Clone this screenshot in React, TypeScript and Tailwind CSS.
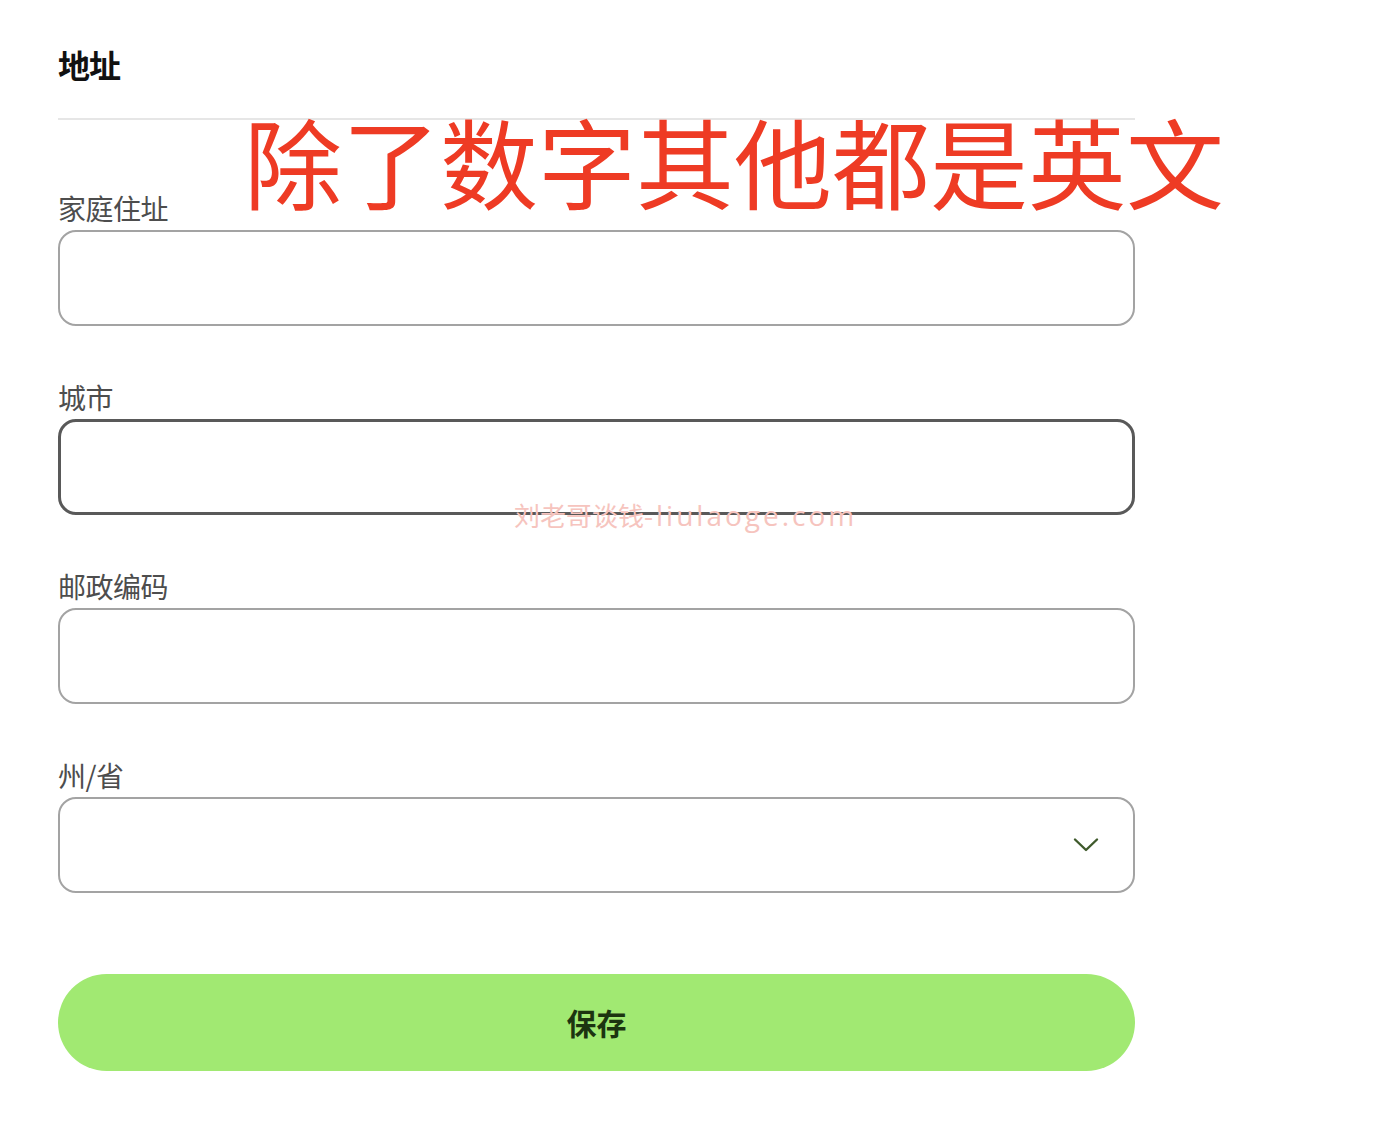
import React from "react";

const cjk = { fontFamily: '"Noto Sans CJK SC", "Noto Sans", sans-serif' };

function Field({ label, focused, select }: { label: string; focused?: boolean; select?: boolean }) {
  return (
    <div className="flex flex-col">
      <label className="text-[28px] leading-[36px] text-[#4d4d4d] tracking-[-0.5px]">{label}</label>
      <div
        className={`mt-[4px] h-[96px] rounded-[18px] bg-white flex items-center justify-end pr-[34px] ${
          focused ? "border-[3px] border-[#595959]" : "border-2 border-[#a3a3a3]"
        }`}
      >
        {select && (
          <svg width="26" height="16" viewBox="0 0 26 16" fill="none">
            <path d="M2 2.5 L13 13 L24 2.5" stroke="#3f5a2c" strokeWidth="2.4" strokeLinecap="round" strokeLinejoin="round" />
          </svg>
        )}
      </div>
    </div>
  );
}

export default function App() {
  return (
    <div className="relative w-[1378px] h-[1125px] bg-white overflow-hidden" style={cjk}>
      <div className="w-[1135px] pl-[58px] pt-[44px]">
        <h2 className="text-[32px] leading-[40px] font-bold text-[#111] tracking-[-1px]">地址</h2>
        <div className="mt-[34px] border-t-2 border-[#e6e6e6]" />

        <div className="mt-[70px] flex flex-col gap-[53px]">
          <Field label="家庭住址" />
          <Field label="城市" focused />
          <Field label="邮政编码" />
          <Field label="州/省" select />
        </div>

        <button className="mt-[81px] w-full h-[97px] rounded-full bg-[#a1e972] text-[30px] font-bold text-[#1c3410] flex items-center justify-center">
          保存
        </button>
      </div>

      {/* annotation overlay */}
      <div className="absolute left-[244px] top-[99px] text-[98px] leading-[120px] text-[#ee3b24] whitespace-nowrap">
        除了数字其他都是英文
      </div>
      <div className="absolute left-[514px] top-[497px] text-[26px] leading-[36px] text-[#f6c4be] whitespace-nowrap">
        刘老哥谈钱
        <span style={{ fontFamily: '"Open Sans", "DejaVu Sans", sans-serif' }} className="text-[28px] tracking-[3px]">
          -liulaoge.com
        </span>
      </div>
    </div>
  );
}
